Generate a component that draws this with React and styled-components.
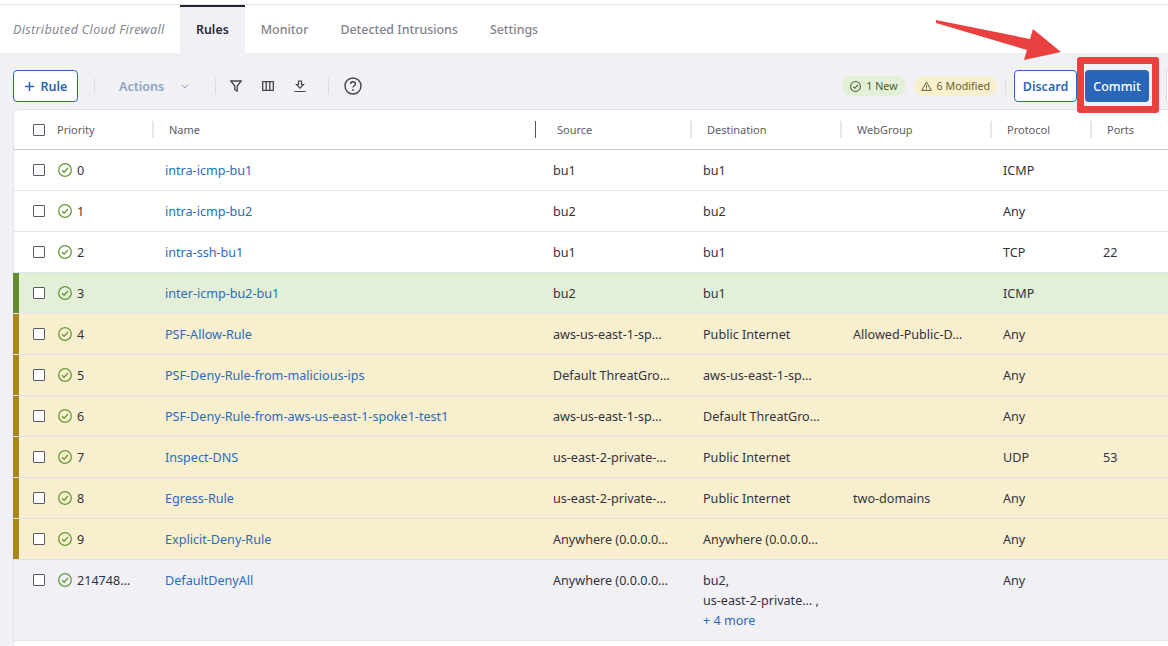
import React from 'react';
import styled, {createGlobalStyle} from 'styled-components';

const rules = [
    {priority: '0', name: 'intra-icmp-bu1', source: 'bu1', destination: ['bu1'], protocol: 'ICMP'},
    {priority: '1', name: 'intra-icmp-bu2', source: 'bu2', destination: ['bu2'], protocol: 'Any'},
    {priority: '2', name: 'intra-ssh-bu1', source: 'bu1', destination: ['bu1'], protocol: 'TCP', ports: '22'},
    {priority: '3', name: 'inter-icmp-bu2-bu1', source: 'bu2', destination: ['bu1'], protocol: 'ICMP', status: 'new'},
    {priority: '4', name: 'PSF-Allow-Rule', source: 'aws-us-east-1-sp…', destination: ['Public Internet'], webGroup: 'Allowed-Public-D…', protocol: 'Any', status: 'modified'},
    {priority: '5', name: 'PSF-Deny-Rule-from-malicious-ips', source: 'Default ThreatGro…', destination: ['aws-us-east-1-sp…'], protocol: 'Any', status: 'modified'},
    {priority: '6', name: 'PSF-Deny-Rule-from-aws-us-east-1-spoke1-test1', source: 'aws-us-east-1-sp…', destination: ['Default ThreatGro…'], protocol: 'Any', status: 'modified'},
    {priority: '7', name: 'Inspect-DNS', source: 'us-east-2-private-…', destination: ['Public Internet'], protocol: 'UDP', ports: '53', status: 'modified'},
    {priority: '8', name: 'Egress-Rule', source: 'us-east-2-private-…', destination: ['Public Internet'], webGroup: 'two-domains', protocol: 'Any', status: 'modified'},
    {priority: '9', name: 'Explicit-Deny-Rule', source: 'Anywhere (0.0.0.0…', destination: ['Anywhere (0.0.0.0…'], protocol: 'Any', status: 'modified'},
    {priority: '214748…', name: 'DefaultDenyAll', source: 'Anywhere (0.0.0.0…', destination: ['bu2,', 'us-east-2-private… ,'], more: '+ 4 more', protocol: 'Any', status: 'system'},
]

const columns = ['Name', 'Source', 'Destination', 'WebGroup', 'Protocol', 'Ports']

const CheckCircle = ({size = 14, color = '#6a9a3c'}) => (
    <svg width={size} height={size} viewBox="0 0 16 16" fill="none" stroke={color} strokeWidth="1.5">
        <circle cx="8" cy="8" r="7.2"/>
        <path d="M4.6 8.2l2.4 2.4 4.4-4.9"/>
    </svg>
)

const App = () => {
    return (
        <Page>
            <GlobalStyle/>
            <TopBar>
                <ProductName>Distributed Cloud Firewall</ProductName>
                <Tab active>Rules</Tab>
                <Tab>Monitor</Tab>
                <Tab>Detected Intrusions</Tab>
                <Tab>Settings</Tab>
            </TopBar>

            <Toolbar>
                <OutlineButton wide>
                    <svg width="11" height="11" viewBox="0 0 12 12" stroke="#2a66b8" strokeWidth="1.7">
                        <path d="M6 1v10M1 6h10"/>
                    </svg>
                    Rule
                </OutlineButton>
                <Divider left={16}/>
                <ActionsMenu>
                    Actions
                    <svg width="8" height="5" viewBox="0 0 8 5" fill="none" stroke="#8aa6c4" strokeWidth="1">
                        <path d="M.7.7L4 4l3.3-3.3"/>
                    </svg>
                </ActionsMenu>
                <Divider left={26}/>
                <IconGroup>
                    <svg width="12" height="12" viewBox="0 0 12 12" fill="none" stroke="#44444f" strokeWidth="1.3">
                        <path d="M.8 1h10.4L7.2 6v5l-2.4-1.4V6z"/>
                    </svg>
                    <svg width="12" height="10" viewBox="0 0 12 10" fill="none" stroke="#44444f" strokeWidth="1.3">
                        <path d="M.7.7h10.6v8.6H.7zM4.2.7v8.6M7.8.7v8.6"/>
                    </svg>
                    <svg width="12" height="13" viewBox="0 0 12 13" fill="none" stroke="#44444f" strokeWidth="1.2">
                        <path d="M4.5 1h3v3.5h2L6 8.2 2.5 4.5h2zM.5 11.5h11"/>
                    </svg>
                </IconGroup>
                <Divider left={22}/>
                <HelpIcon width="18" height="18" viewBox="0 0 18 18" fill="none" stroke="#44444f" strokeWidth="1.4">
                    <circle cx="9" cy="9" r="8"/>
                    <path d="M6.6 7c0-1.4 1-2.2 2.4-2.2s2.4.9 2.4 2.1c0 1.9-2.4 1.8-2.4 3.7"/>
                    <path d="M9 12.2v1.5" strokeWidth="1.6"/>
                </HelpIcon>

                <ToolbarRight>
                    <Pill kind="new"><CheckCircle size={11} color="#4a5a30"/>1 New</Pill>
                    <Pill kind="modified">
                        <svg width="11" height="10" viewBox="0 0 11 10" fill="none" stroke="#6e5f2a" strokeWidth="1">
                            <path d="M5.5 1L10.3 9.4H.7zM5.5 4v2.8M5.5 7.4v.9"/>
                        </svg>
                        6 Modified
                    </Pill>
                    <Divider left={8} right={8}/>
                    <OutlineButton>Discard</OutlineButton>
                    <CommitButton>Commit</CommitButton>
                    <MoreButton/>
                </ToolbarRight>
            </Toolbar>

            <Table>
                <HeaderRow>
                    <PriorityHeader>
                        <Check type="checkbox"/>
                        Priority
                    </PriorityHeader>
                    {columns.map(c => <HeaderCell key={c} resizing={c === 'Source'}>{c}</HeaderCell>)}
                </HeaderRow>

                {rules.map(rule => (
                    <Row key={rule.priority} status={rule.status}>
                        <PriorityCell>
                            <Check type="checkbox"/>
                            <CheckCircle/>
                            <PriorityValue>{rule.priority}</PriorityValue>
                        </PriorityCell>
                        <Cell><RuleLink>{rule.name}</RuleLink></Cell>
                        <Cell>{rule.source}</Cell>
                        <Cell>
                            {rule.destination.map(d => <div key={d}>{d}</div>)}
                            {rule.more && <RuleLink>{rule.more}</RuleLink>}
                        </Cell>
                        <Cell>{rule.webGroup}</Cell>
                        <Cell>{rule.protocol}</Cell>
                        <Cell>{rule.ports}</Cell>
                    </Row>
                ))}
            </Table>

            <Arrow width="130" height="50" viewBox="0 0 130 50">
                <polygon points="1,2 95,21 98,11 126,34 89,42 92,32 1,5" fill="#e94040"/>
            </Arrow>
            <Highlight/>
        </Page>
    );
};

const GlobalStyle = createGlobalStyle`
  html, body {
    margin: 0;
    height: 100%;
    overflow: hidden;
    background: #fff;
  }
  * {
    box-sizing: border-box;
  }
`

const Page = styled.div`
  position: relative;
  width: 1168px;
  height: 646px;
  padding-top: 4px;
  display: flex;
  flex-direction: column;
  background: #f0f0f5;
  font-family: "Noto Sans", sans-serif;
  font-size: 12.6px;
  color: #33333d;
  overflow: hidden;
  box-shadow: inset 0 4px 0 #fff;
`

const TopBar = styled.div`
  height: 49px;
  display: flex;
  align-items: stretch;
  background: #fff;
  border-top: 1px solid #e2e2e8;
  padding-left: 13px;
`

const ProductName = styled.div`
  width: 167px;
  display: flex;
  align-items: center;
  font-style: italic;
  font-size: 12.5px;
  letter-spacing: .35px;
  color: #85858f;
`

const Tab = styled.div`
  padding: 0 16px 2px;
  display: flex;
  align-items: center;
  font-size: 12.4px;
  font-weight: ${props => props.active ? 600 : 500};
  color: ${props => props.active ? '#2b2b36' : '#82828c'};
  background: ${props => props.active ? '#f0f0f5' : 'transparent'};
  border-top: 2px solid ${props => props.active ? '#22222c' : 'transparent'};
`

const Toolbar = styled.div`
  height: 56px;
  padding: 10px 0 0 13px;
  display: flex;
  align-items: center;
`

const Divider = styled.div`
  width: 1px;
  height: 16px;
  margin-left: ${props => props.left}px;
  margin-right: ${props => props.right || 0}px;
  background: #dcdce3;
`

const OutlineButton = styled.button`
  height: 32px;
  padding: 0;
  width: ${props => props.wide ? 65 : 63}px;
  display: flex;
  align-items: center;
  justify-content: center;
  gap: 6px;
  background: #fff;
  border: 1px solid #2a66b8;
  border-radius: 4px;
  font: 600 12.5px "Noto Sans", sans-serif;
  color: #2a66b8;
`

const ActionsMenu = styled.div`
  margin-left: 24px;
  display: flex;
  align-items: center;
  gap: 17px;
  font-size: 12.5px;
  font-weight: 600;
  color: #8aa6c4;
`

const IconGroup = styled.div`
  margin-left: 14px;
  display: flex;
  align-items: center;
  gap: 20px;
`

const HelpIcon = styled.svg`
  margin-left: 15px;
`

const ToolbarRight = styled.div`
  margin-left: auto;
  display: flex;
  align-items: center;
`

const Pill = styled.div`
  height: 20px;
  padding: 0 ${props => props.kind === 'new' ? 8 : 7}px;
  margin-right: 8px;
  display: flex;
  align-items: center;
  gap: 5px;
  border-radius: 10px;
  font-size: 10.7px;
  white-space: nowrap;
  background: ${props => props.kind === 'new' ? '#e3efd6' : '#f8efcf'};
  color: ${props => props.kind === 'new' ? '#4a5a30' : '#6e5f2a'};
  & + & {
    margin-right: 0;
  }
`

const CommitButton = styled.button`
  width: 64px;
  height: 32px;
  margin-left: 8px;
  padding: 0;
  background: #2a66b8;
  border: none;
  border-radius: 4px;
  font: 500 12.5px "Noto Sans", sans-serif;
  color: #fff;
`

const MoreButton = styled.div`
  width: 2px;
  height: 32px;
  margin-left: 17px;
  background: #fff;
  border: 1px solid #dcdce3;
  border-right: none;
  border-radius: 4px 0 0 4px;
`

const Table = styled.div`
  flex: 1;
  margin-left: 13px;
  background: #fff;
  border-top: 1px solid #e3e3ea;
  border-top-left-radius: 4px;
  box-shadow: inset 1px 0 0 #e3e3ea;
`

const grid = `
  display: grid;
  grid-template-columns: 140px 388px 150px 150px 150px 100px 77px;
`

const HeaderRow = styled.div`
  ${grid};
  height: 40px;
  border-bottom: 1px solid #c9c9d1;
  font-size: 11px;
  color: #5c5c66;
`

const PriorityHeader = styled.div`
  padding-left: 20px;
  display: flex;
  align-items: center;
  gap: 12px;
`

const HeaderCell = styled.div`
  position: relative;
  padding-left: 16px;
  display: flex;
  align-items: center;
  &:before {
    content: "";
    position: absolute;
    top: 11px;
    left: ${props => props.resizing ? -6 : -1}px;
    width: ${props => props.resizing ? 1 : 2}px;
    height: 17px;
    background: ${props => props.resizing ? '#55555f' : '#e6e6ec'};
  }
`

const statusBg = {new: '#e3efd6', modified: '#f8efcf', system: '#f0f0f5'}
const statusBar = {new: '#628d2f', modified: '#a9871f'}

const Row = styled.div`
  ${grid};
  padding: 10px 0 9px;
  min-height: 41px;
  line-height: 20px;
  border-bottom: 1px solid #e3e3ea;
  background: ${props => statusBg[props.status] || '#fff'};
  box-shadow: ${props => statusBar[props.status] ? `inset 6px 0 0 ${statusBar[props.status]}` : 'inset 1px 0 0 #e3e3ea'};
`

const PriorityCell = styled.div`
  padding-left: 20px;
  height: 20px;
  display: flex;
  align-items: center;
  gap: 5px;
  white-space: nowrap;
  & > input {
    margin-right: 8px;
  }
`

const PriorityValue = styled.span`
  margin-top: 2px;
`

const Cell = styled.div`
  padding: 1px 0 0 12px;
  white-space: nowrap;
`

const RuleLink = styled.a`
  color: #2a6cbb;
`

const Check = styled.input`
  appearance: none;
  margin: 0;
  flex: none;
  width: 12px;
  height: 12px;
  background: #fff;
  border: 1.5px solid #5a5a66;
  border-radius: 1px;
`

const Arrow = styled.svg`
  position: absolute;
  left: 935px;
  top: 18px;
`

const Highlight = styled.div`
  position: absolute;
  left: 1077px;
  top: 57px;
  width: 82px;
  height: 56px;
  border: 7px solid #e94040;
  border-radius: 3px;
`

export default App;
